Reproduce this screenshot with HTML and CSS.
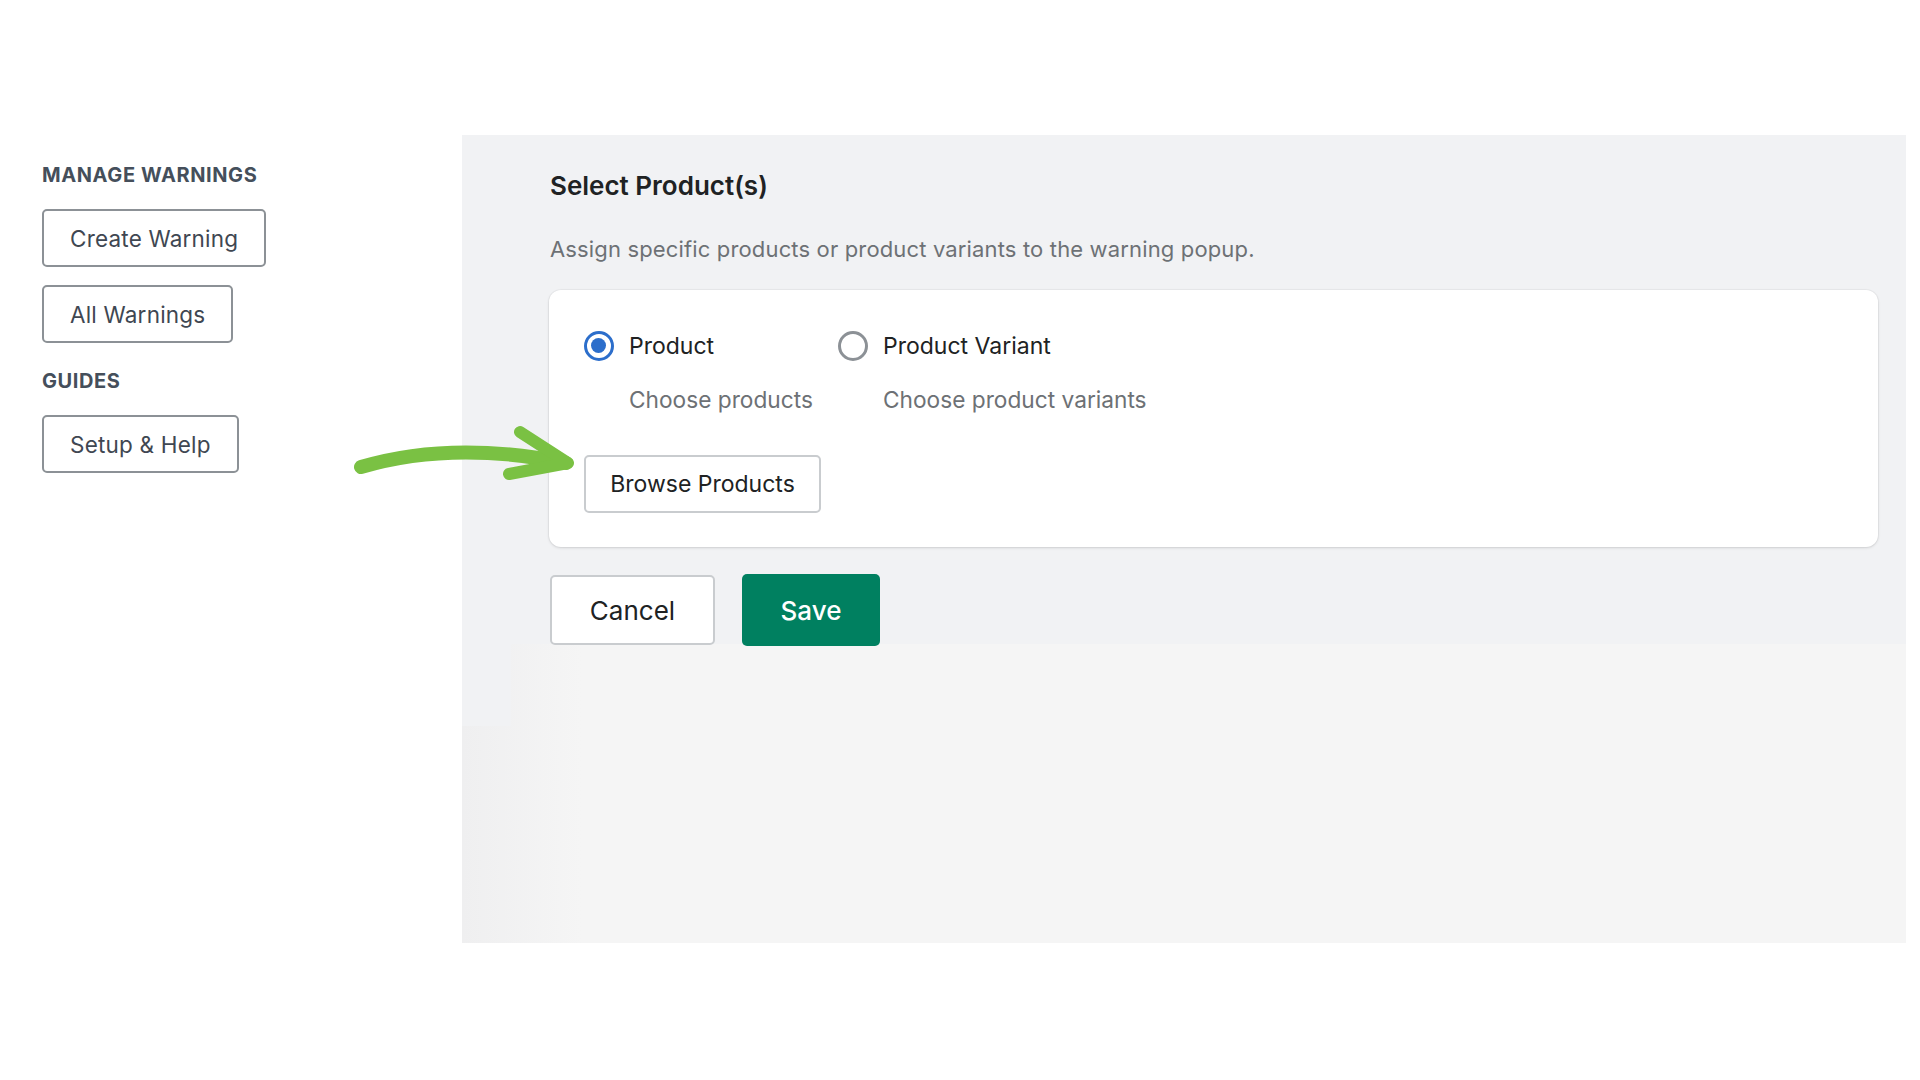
FILE: index.html
```html
<!DOCTYPE html>
<html lang="en">
<head>
<meta charset="utf-8">
<title>Select Products</title>
<link rel="stylesheet" href="styles.css">
</head>
<body>
<div class="layout">
  <aside class="sidebar">
    <h3 class="side-heading">MANAGE WARNINGS</h3>
    <div class="side-buttons">
      <button class="side-btn">Create Warning</button>
      <button class="side-btn">All Warnings</button>
    </div>
    <h3 class="side-heading guides">GUIDES</h3>
    <div class="side-buttons">
      <button class="side-btn">Setup &amp; Help</button>
    </div>
  </aside>
  <main class="panel">
    <h2 class="title">Select Product(s)</h2>
    <p class="desc">Assign specific products or product variants to the warning popup.</p>
    <section class="card">
      <div class="options">
        <label class="option">
          <span class="radio checked"></span>
          <span class="opt-label">Product</span>
          <span class="opt-help">Choose products</span>
        </label>
        <label class="option">
          <span class="radio"></span>
          <span class="opt-label">Product Variant</span>
          <span class="opt-help">Choose product variants</span>
        </label>
      </div>
      <button class="browse-btn">Browse Products</button>
    </section>
    <div class="actions">
      <button class="btn-cancel">Cancel</button>
      <button class="btn-save">Save</button>
    </div>
  </main>
</div>
<svg class="arrow" viewBox="340 420 250 70" width="250" height="70" aria-hidden="true">
  <path d="M361 467 Q 452 440 566 463" fill="none" stroke="#7ac143" stroke-width="14" stroke-linecap="round"/>
  <path d="M520 432 L568 463 L509 474" fill="none" stroke="#7ac143" stroke-width="12" stroke-linecap="round" stroke-linejoin="round"/>
</svg>
</body>
</html>
```
FILE: styles.css
```css
* { box-sizing: border-box; }
html, body { margin: 0; padding: 0; background: #ffffff; }
body {
  font-family: Inter, "Noto Sans", "Liberation Sans", sans-serif;
  width: 1920px;
  height: 1080px;
  position: relative;
  overflow: hidden;
}
.layout {
  display: flex;
  align-items: flex-start;
}
.sidebar {
  width: 462px;
  flex: none;
  padding: 163px 0 0 42px;
}
.side-heading {
  margin: 0;
  font-size: 20px;
  line-height: 24px;
  font-weight: 700;
  color: #454f5b;
  letter-spacing: 0.6px;
}
.side-heading.guides { margin-top: 26px; }
.side-buttons {
  display: flex;
  flex-direction: column;
  align-items: flex-start;
  gap: 18px;
  margin-top: 22px;
}
.side-btn {
  font-family: inherit;
  height: 58px;
  padding: 0 26px 0 26px;
  background: #fff;
  border: 2px solid #8c9196;
  border-radius: 5px;
  font-size: 22.5px;
  color: #3f4752;
  letter-spacing: 0.2px;
}
.panel {
  margin-top: 135px;
  width: 1444px;
  height: 808px;
  flex: none;
  padding: 35px 28px 0 88px;
  background:
    linear-gradient(#f1f2f4, #f1f2f4) 0 0 / 100% 509px no-repeat,
    linear-gradient(#f1f2f4, #f1f2f4) 0 0 / 49px 591px no-repeat,
    linear-gradient(90deg, #efeff0 0, #f5f5f5 120px) 0 0 / 100% 100% no-repeat;
}
.title {
  margin: 0;
  font-size: 26px;
  line-height: 32px;
  font-weight: 600;
  color: #202223;
  letter-spacing: 0;
}
.desc {
  margin: 33px 0 0;
  font-size: 22px;
  line-height: 28px;
  color: #6d7175;
  letter-spacing: 0.15px;
}
.card {
  margin: 27px 0 0 -1px;
  background: #fff;
  border-radius: 12px;
  box-shadow: 0 1px 3px rgba(0,0,0,0.12), 0 0 0 1px rgba(0,0,0,0.03);
  padding: 41px 28px 34px 35px;
}
.options {
  display: grid;
  grid-template-columns: 254px auto;
  justify-content: start;
}
.option {
  display: grid;
  grid-template-columns: 30px auto;
  column-gap: 15px;
  row-gap: 25px;
  align-items: center;
  justify-content: start;
}
.radio {
  width: 30px;
  height: 30px;
  border-radius: 50%;
  border: 3.5px solid #8c9196;
  background: #fff;
  position: relative;
}
.radio.checked {
  border-color: #2c6ecb;
}
.radio.checked::after {
  content: "";
  position: absolute;
  left: 4px; top: 4px;
  width: 15px; height: 15px;
  border-radius: 50%;
  background: #2c6ecb;
}
.opt-label {
  font-size: 23px;
  line-height: 28px;
  color: #202223;
}
.opt-help {
  grid-column: 2;
  font-size: 22.7px;
  line-height: 28px;
  color: #6d7175;
}
.browse-btn {
  margin-top: 41px;
  font-family: inherit;
  height: 58px;
  width: 237px;
  padding: 0;
  background: #fff;
  border: 2px solid #c9cccf;
  border-radius: 5px;
  font-size: 23px;
  color: #202223;
}
.actions {
  display: flex;
  align-items: center;
  gap: 27px;
  margin-top: 27px;
}
.btn-cancel {
  font-family: inherit;
  width: 165px;
  height: 70px;
  background: #fff;
  border: 2px solid #c9cccf;
  border-radius: 5px;
  font-size: 26px;
  color: #202223;
}
.btn-save {
  font-family: inherit;
  width: 138px;
  height: 72px;
  background: #008060;
  border: none;
  border-radius: 5px;
  font-size: 26px;
  font-weight: 500;
  color: #fff;
}
.arrow {
  position: absolute;
  left: 340px;
  top: 420px;
}
```
